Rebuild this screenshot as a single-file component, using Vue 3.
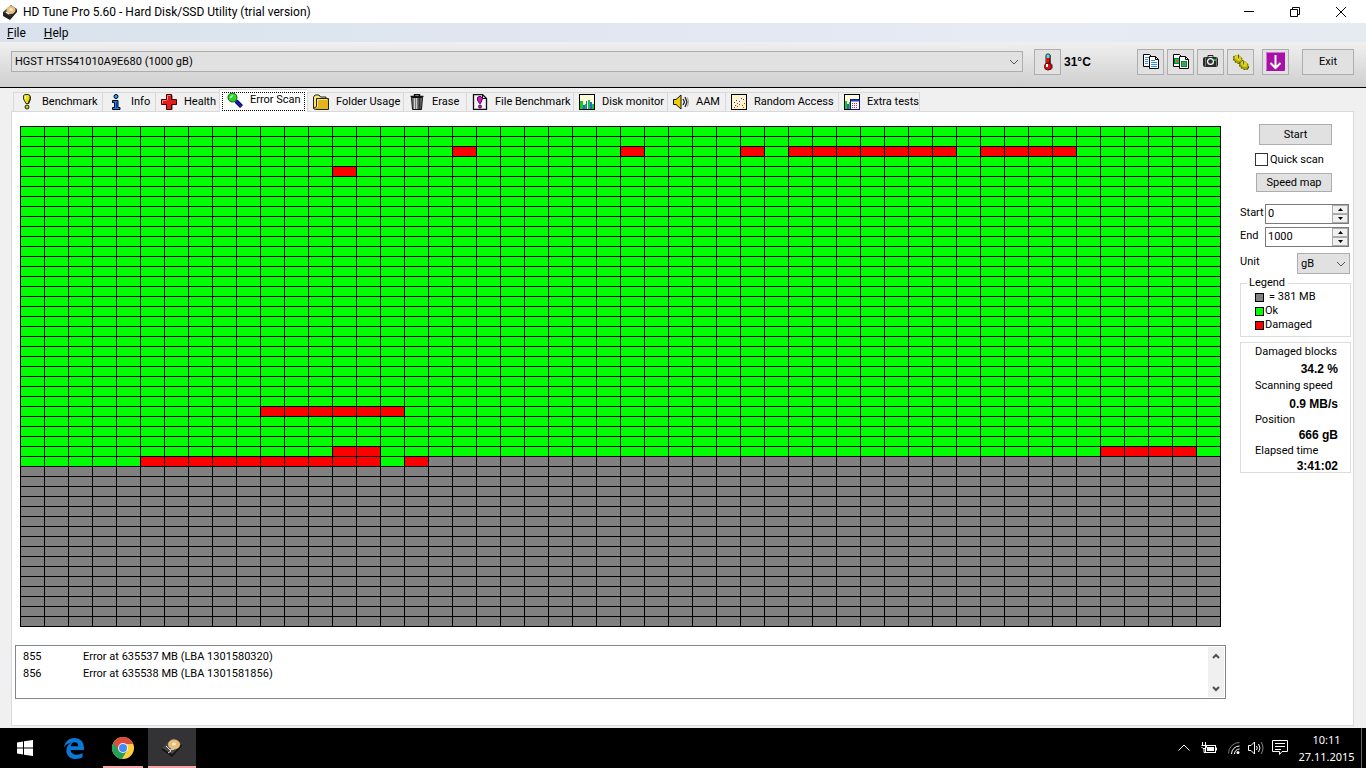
<script setup>
import { ref } from 'vue'

const COLS = 50
const ROWS = 50
const CURRENT_ROW = 33
const CURRENT_COL = 16

const damaged = {
  2: [[18, 18], [25, 25], [30, 30], [32, 38], [40, 43]],
  4: [[13, 13]],
  28: [[10, 15]],
  32: [[13, 14], [45, 48]],
  33: [[5, 14], [16, 16]]
}

const blocks = []
for (let r = 0; r < ROWS; r++) {
  for (let c = 0; c < COLS; c++) {
    const pending = r > CURRENT_ROW || (r === CURRENT_ROW && c > CURRENT_COL)
    const bad = (damaged[r] || []).some(([a, b]) => c >= a && c <= b)
    blocks.push(pending ? 'pending' : bad ? 'bad' : 'ok')
  }
}

const tabs = [
  { id: 'bench', label: 'Benchmark' },
  { id: 'info', label: 'Info' },
  { id: 'health', label: 'Health' },
  { id: 'scan', label: 'Error Scan' },
  { id: 'folder', label: 'Folder Usage' },
  { id: 'erase', label: 'Erase' },
  { id: 'file', label: 'File Benchmark' },
  { id: 'monitor', label: 'Disk monitor' },
  { id: 'aam', label: 'AAM' },
  { id: 'random', label: 'Random Access' },
  { id: 'extra', label: 'Extra tests' }
]
const active = ref('scan')
const start = ref('0')
const end = ref('1000')
const quick = ref(false)

const errors = [
  { n: 855, text: 'Error at 635537 MB (LBA 1301580320)' },
  { n: 856, text: 'Error at 635538 MB (LBA 1301581856)' }
]

const step = (field, by) => {
  const target = field === 'start' ? start : end
  target.value = String(Math.max(0, Number(target.value) + by))
}
</script>

<template>
  <div class="screen">
    <header class="titlebar">
      <svg class="app-icon" viewBox="0 0 16 16">
        <path d="M1 8 9 1l6 4-7 10-6-3z" fill="#4a4238" />
        <path d="M1 8l7 4 7-7v3l-7 8-7-4z" fill="#22201e" />
        <ellipse cx="9" cy="6" rx="4.5" ry="4" fill="#e8bf80" />
        <ellipse cx="9" cy="5.5" rx="1.5" ry="1.2" fill="#fff4d8" />
        <path d="M4 8l3 2" stroke="#eee" stroke-width="1.5" />
      </svg>
      <h1>HD Tune Pro 5.60 - Hard Disk/SSD Utility (trial version)</h1>
      <div class="window-controls">
        <button aria-label="Minimize"><svg viewBox="0 0 12 12"><path d="M1 5.5h10" /></svg></button>
        <button aria-label="Restore"><svg viewBox="0 0 12 12"><path d="M1.5 3.500h7v7h-7zM3.500 3.500v-2h7v7h-2" /></svg></button>
        <button aria-label="Close"><svg viewBox="0 0 12 12"><path d="M1 1l10 10M11 1 1 11" /></svg></button>
      </div>
    </header>

    <nav class="menubar">
      <button><u>F</u>ile</button>
      <button><u>H</u>elp</button>
    </nav>

    <div class="toolbar">
      <div class="drop drive">
        <select aria-label="Drive">
          <option>HGST HTS541010A9E680 (1000 gB)</option>
        </select>
        <svg class="chevron" viewBox="0 0 10 6"><path d="M1 1l4 4 4-4" /></svg>
      </div>
      <button class="tool thermo" aria-label="Temperature">
        <svg viewBox="0 0 18 18">
          <path d="M10 2h2v8l2 2v3l-2 2H8l-2-2v-3l3-2z" fill="#222" opacity=".5" />
          <rect x="7" y="1" width="4" height="11" rx="1.5" fill="#58dce8" stroke="#222" />
          <rect x="7" y="5" width="4" height="8" fill="#e01010" />
          <path d="M10.500 5v6" stroke="#600" />
          <circle cx="9" cy="13.500" r="3.500" fill="#e01010" stroke="#500" />
          <rect x="7" y="11" width="2" height="3" fill="#fff" />
        </svg>
      </button>
      <strong class="temp">31°C</strong>
      <div class="tools">
        <button class="tool" aria-label="Copy text">
          <svg viewBox="0 0 18 18">
            <path d="M1.500 1.500h6l2 2v10h-8z" fill="#fff" stroke="#000" />
            <path d="M7.500 3.500h6l3 3v9h-9z" fill="#fff" stroke="#000" />
            <path d="M13.500 3.500v3h3" fill="none" stroke="#000" />
            <path d="M3 4.500h4M3 6.500h3M3 8.500h3M3 10.500h3M9 7.500h4M9 9.500h6M9 11.500h6M9 13.500h6" stroke="#2a8cf0" />
          </svg>
        </button>
        <button class="tool" aria-label="Copy image">
          <svg viewBox="0 0 18 18">
            <path d="M1.500 1.500h6l2 2v10h-8z" fill="#fff" stroke="#000" />
            <rect x="2.500" y="5.500" width="5" height="5" fill="#10d030" stroke="#007a60" />
            <rect x="4" y="7" width="2" height="2" fill="#e05010" />
            <path d="M7.500 3.500h6l3 3v9h-9z" fill="#fff" stroke="#000" />
            <path d="M13.500 3.500v3h3" fill="none" stroke="#000" />
            <rect x="9.500" y="8.500" width="5" height="5" fill="#10d030" stroke="#007a60" />
            <rect x="11" y="10" width="2" height="2" fill="#e05010" />
          </svg>
        </button>
        <button class="tool" aria-label="Screenshot">
          <svg viewBox="0 0 18 18">
            <path d="M6 4.500V2.500h5v2" fill="none" stroke="#222" />
            <rect x="1" y="4" width="15" height="10" rx="2" fill="#2a2a2a" />
            <path d="M3.500 4.500v9M14.500 4.500v9" stroke="#777" />
            <circle cx="8.500" cy="8.500" r="3.500" fill="#fff" />
            <circle cx="8.500" cy="8.500" r="2.300" fill="#303436" />
            <rect x="12" y="6" width="2" height="2" fill="#0c2" />
          </svg>
        </button>
        <button class="tool" aria-label="Options">
          <svg viewBox="0 0 18 18">
            <ellipse cx="6" cy="6.500" rx="5" ry="3.500" transform="rotate(35 6 6.500)" fill="#a8a400" stroke="#4c4a00" stroke-dasharray="2 1" />
            <ellipse cx="6" cy="5" rx="3.500" ry="2.300" transform="rotate(35 6 5)" fill="#dcd420" />
            <ellipse cx="12" cy="12.500" rx="5" ry="3.500" transform="rotate(35 12 12.500)" fill="#a8a400" stroke="#4c4a00" stroke-dasharray="2 1" />
            <ellipse cx="12" cy="11" rx="3.500" ry="2.300" transform="rotate(35 12 11)" fill="#dcd420" />
            <path d="M6.500 1.500v4M11.500 7.500v4" stroke="#665f00" />
          </svg>
        </button>
        <button class="tool spaced" aria-label="Save">
          <svg class="big" viewBox="0 0 20 20">
            <rect width="19" height="19" rx="1" fill="#a512a5" />
            <path d="M.5 18V.5h18" stroke="#d870d8" fill="none" />
            <path d="M9.500 3v12M4.500 11l5 5 5-5" fill="none" stroke="#fff" stroke-width="2" />
          </svg>
        </button>
        <button class="tool exit">Exit</button>
      </div>
    </div>

    <div class="tabs" role="tablist">
      <button
        v-for="t in tabs"
        :key="t.id"
        class="tab"
        :class="{ active: active === t.id }"
        role="tab"
        :aria-selected="active === t.id"
        @click="active = t.id"
      >
        <svg v-if="t.id === 'bench'" viewBox="0 0 16 16">
          <path d="M5 2l2-1.500h3L12 3v2l-2 5H7L5 5z" fill="#222" />
          <path d="M4.500 1.500 6 .5h3l2 1v3L9 9.500H7L4.500 5z" fill="#f0e000" stroke="#333" />
          <path d="M6.500 2v2.500" stroke="#fff" />
          <circle cx="8" cy="13" r="2" fill="#d8cc00" stroke="#222" />
        </svg>
        <svg v-else-if="t.id === 'info'" viewBox="0 0 16 16">
          <circle cx="8" cy="2.500" r="2" fill="#20a8f8" stroke="#000" />
          <path d="M4.500 6.500H10v7h2v2H4.500v-2h2v-5h-2z" fill="#1088f8" stroke="#000" />
          <path d="M8.500 8v6" stroke="#0038e0" />
        </svg>
        <svg v-else-if="t.id === 'health'" viewBox="0 0 16 16">
          <path d="M6 1.500h5.500v4.500h4v5h-4v4.500H6V11H1.500V6H6z" fill="#333" />
          <path d="M5.500.5h5v5h5v5h-5v5h-5v-5h-5v-5h5z" fill="#e01c1c" stroke="#400" />
          <path d="M6.500 6V1.500h3M1.500 9.500v-3h4" stroke="#ff8080" fill="none" />
        </svg>
        <svg v-else-if="t.id === 'scan'" viewBox="0 0 16 16">
          <path d="M9 9l5.500 5.500" stroke="#000" stroke-width="4" />
          <path d="M9 9l5.500 5.500" stroke="#1018c8" stroke-width="2.500" />
          <circle cx="5.500" cy="5.500" r="4.500" fill="#28d428" stroke="#106010" />
          <path d="M3 6l3-3" stroke="#b8ffb8" stroke-width="1.500" />
        </svg>
        <svg v-else-if="t.id === 'folder'" viewBox="0 0 16 16">
          <path d="M.5 14.500V3l1.500-2h4l1.500 2H13v1.500" fill="#f8e878" stroke="#222" />
          <path d="M3.500 4.500h12v11h-13l-2-1 3-2z" fill="#e4b418" stroke="#222" />
          <path d="M4.500 13V5.500H14" stroke="#ffe980" fill="none" />
        </svg>
        <svg v-else-if="t.id === 'erase'" viewBox="0 0 16 16">
          <path d="M1.500 2.500h13M5.500 2V.5h5V2" stroke="#111" stroke-width="1.500" fill="none" />
          <path d="M2.500 3.500h11l-1 12h-9z" fill="#777" stroke="#111" />
          <path d="M5.500 4v11M7.500 4v11" stroke="#ccc" />
          <path d="M10.500 4v11" stroke="#333" stroke-width="2" />
        </svg>
        <svg v-else-if="t.id === 'file'" viewBox="0 0 16 16">
          <path d="M1.500.5h9l4 4v11h-13z" fill="#f8f4f8" stroke="#111" stroke-width="1.300" />
          <path d="M10.500.5v4h4" fill="none" stroke="#111" />
          <path d="M5.500 3.500 7 2.500h2l1.500 2L8.500 9.500h-1L5.500 6z" fill="#e010d8" stroke="#401040" />
          <circle cx="8" cy="12.500" r="1.500" fill="#e010d8" stroke="#401040" />
        </svg>
        <svg v-else-if="t.id === 'monitor'" viewBox="0 0 16 16">
          <rect x=".5" y=".5" width="15" height="15" fill="#fffcd8" stroke="#000" />
          <path d="M1 15V7h3v8M6 15v-5h2v5M9 15V6h2v9M13 15v-5h2v5" fill="#0ad020" />
          <path d="M4 15v-4h2v4M7 15V7h1v8M11 15V8h2v7" fill="#3858e8" />
        </svg>
        <svg v-else-if="t.id === 'aam'" viewBox="0 0 16 16">
          <path d="M.5 5.500H3l5-4.500v14l-5-4.500H.5z" fill="#f0d000" stroke="#111" />
          <path d="M10 5l1.500 3L10 11M12 3l2 5-2 5" fill="none" stroke="#222" stroke-width="1.300" />
          <path d="M14.500 3.500l1 4.500-1 4.500" fill="none" stroke="#999" />
        </svg>
        <svg v-else-if="t.id === 'random'" viewBox="0 0 16 16">
          <rect x=".5" y=".5" width="15" height="15" fill="#fff4cc" stroke="#000" />
          <path d="M3 8.500h1M5 6.500h1M8 7.500h1M10 4.500h1M12 5.500h1M4 11.500h1" stroke="#3030ff" />
          <path d="M3 13.500h1M6 12.500h1M8 10.500h1M11 11.500h1M13 9.500h1M6 9.500h1M12 13.500h1" stroke="#f02020" />
        </svg>
        <svg v-else viewBox="0 0 16 16">
          <rect x=".5" y=".5" width="15" height="15" fill="#fffcd8" stroke="#000" />
          <path d="M1 15V7h2v8M5 15V8h1v7" fill="#0ad020" />
          <path d="M3 15v-5h2v5" fill="#3858e8" />
          <rect x="6.500" y="5.500" width="9" height="10" fill="#fff" stroke="#10107a" />
          <path d="M7 6.500h8" stroke="#2038c0" stroke-width="2" />
          <path d="M8 9.500h6M8 11.500h6M8 13.500h6" stroke="#e02040" stroke-dasharray="1 1" />
        </svg>
        <span>{{ t.label }}</span>
      </button>
    </div>

    <main class="panel">
      <section class="work">
        <div class="map" role="img" aria-label="Block map">
          <i v-for="(b, i) in blocks" :key="i" :class="b"></i>
        </div>
        <div class="log">
          <table>
            <tbody>
              <tr v-for="e in errors" :key="e.n">
                <td class="num">{{ e.n }}</td>
                <td>{{ e.text }}</td>
              </tr>
            </tbody>
          </table>
          <div class="scrollbar">
            <button aria-label="Scroll up"><svg viewBox="0 0 8 6"><path d="M1 5l3-3 3 3" /></svg></button>
            <button aria-label="Scroll down"><svg viewBox="0 0 8 6"><path d="M1 1l3 3 3-3" /></svg></button>
          </div>
        </div>
      </section>

      <aside class="side">
        <button class="push">Start</button>
        <label class="check"><input v-model="quick" type="checkbox" />Quick scan</label>
        <button class="push speed">Speed map</button>
        <div class="field">
          <label for="start">Start</label>
          <div class="spin">
            <input id="start" v-model="start" type="text" />
            <div class="arrows">
              <button aria-label="Increase start" @click="step('start', 1)"><svg viewBox="0 0 5 3"><path d="M0 3 2.500 0 5 3z" /></svg></button>
              <button aria-label="Decrease start" @click="step('start', -1)"><svg viewBox="0 0 5 3"><path d="M0 0h5L2.500 3z" /></svg></button>
            </div>
          </div>
        </div>
        <div class="field">
          <label for="end">End</label>
          <div class="spin">
            <input id="end" v-model="end" type="text" />
            <div class="arrows">
              <button aria-label="Increase end" @click="step('end', 1)"><svg viewBox="0 0 5 3"><path d="M0 3 2.500 0 5 3z" /></svg></button>
              <button aria-label="Decrease end" @click="step('end', -1)"><svg viewBox="0 0 5 3"><path d="M0 0h5L2.500 3z" /></svg></button>
            </div>
          </div>
        </div>
        <div class="field unit">
          <label for="unit">Unit</label>
          <div class="drop">
            <select id="unit"><option>gB</option></select>
            <svg class="chevron" viewBox="0 0 10 6"><path d="M1 1l4 4 4-4" /></svg>
          </div>
        </div>
        <fieldset class="legend">
          <legend>Legend</legend>
          <p class="size"><i class="pending"></i>= 381 MB</p>
          <p><i class="ok"></i>Ok</p>
          <p><i class="bad"></i>Damaged</p>
        </fieldset>
        <dl class="stats">
          <dt>Damaged blocks</dt><dd>34.2 %</dd>
          <dt>Scanning speed</dt><dd>0.9 MB/s</dd>
          <dt>Position</dt><dd>666 gB</dd>
          <dt>Elapsed time</dt><dd>3:41:02</dd>
        </dl>
      </aside>
    </main>

    <footer class="taskbar">
      <button class="task" aria-label="Windows">
        <svg width="16" height="16" viewBox="0 0 16 16"><path d="M0 2.500 6 1.500v6H0zM7 1.300 16 0v7.500H7zM0 8.500h6v6l-6-1zM7 8.500h9V16l-9-1.300z" fill="#fff" /></svg>
      </button>
      <button class="task" aria-label="Edge">
        <svg width="20" height="21" viewBox="0 0 20 21"><path d="M0 9.500C.8 4 4.800 0 10.300 0 16.500 0 20 4.300 20 10v2H6.600c.2 3.300 3.200 4.700 6.300 4.700 2.200 0 4-.6 5.600-1.600v4.200c-2 1.200-4.200 1.700-6.600 1.700C6.200 21 2.400 17.400 2.400 12.400c0-3.700 2-6.500 5.300-7.900C3.800 5 1.500 7 0 9.500zM6.700 8.300h7.600c0-2.600-1.300-4.100-3.700-4.100-2.200 0-3.500 1.600-3.900 4.100z" fill="#0a78d7" /></svg>
      </button>
      <button class="task chrome" aria-label="Chrome">
        <svg width="22" height="22" viewBox="0 0 22 22">
          <circle cx="11" cy="11" r="11" fill="#fdd03c" />
          <path d="M11 11 1.500 5.500A11 11 0 0 0 10 22l5-8.500z" fill="#22a05a" />
          <path d="M1.500 5.500A11 11 0 0 1 20.500 5.500L21 7H11L6.500 13.500z" fill="#dd4b3e" />
          <circle cx="11" cy="11" r="5" fill="#f4f4f4" />
          <circle cx="11" cy="11" r="4" fill="#4688f4" />
        </svg>
      </button>
      <button class="task current" aria-label="HD Tune Pro">
        <svg width="20" height="20" viewBox="0 0 20 20">
          <path d="M0 11 11 1l9 6-10 12z" fill="#4c4844" />
          <path d="M0 11l10 6 10-10v2L10 20 0 13z" fill="#161514" />
          <ellipse cx="12" cy="7.500" rx="6" ry="5" fill="#e9bb78" />
          <ellipse cx="12" cy="7" rx="2" ry="1.500" fill="#fff0cc" />
          <path d="M4 9l5 5-3 2M12 12l-4 1" stroke="#ddd" fill="none" />
        </svg>
      </button>
      <div class="tray">
        <svg class="wide" width="12" height="12" viewBox="0 0 12 12"><path d="M.5 8.500 6 3l5.500 5.500" /></svg>
        <svg class="wide" width="16" height="12" viewBox="0 0 16 12">
          <rect x="4.500" y="3.500" width="10" height="7" /><path d="M6 5h7v4H6z" fill="#fff" stroke="none" /><path d="M15.500 5.500v3M1.500 0v3M4.500 0v3M.5 3.500h5v2l-1.500 1H2L.5 5M3 6.500v4h2" />
        </svg>
        <svg width="12" height="12" viewBox="0 0 12 12">
          <path d="M.5 11.500a11 11 0 0 1 11-11" stroke="#777" /><path d="M3.500 12a8 8 0 0 1 8-8M6.500 12a5 5 0 0 1 5-5" /><circle cx="10" cy="10.500" r="1.500" fill="#fff" stroke="none" />
        </svg>
        <svg width="16" height="14" viewBox="0 0 16 14">
          <path d="M.5 4.500H3L6.500 1v12L3 9.500H.5z" /><path d="M8.500 5q1.500 2 0 4M10.500 3q3 4 0 8" /><path d="M13 1q4 6 0 12" stroke="#888" />
        </svg>
        <svg width="16" height="16" viewBox="0 0 16 16">
          <path d="M.5.500h15v11H10l-2.500 3v-3h-7zM3 3.500h10M3 6.500h10M3 9.500h6" />
        </svg>
        <div class="clock"><span>10:11</span><span>27.11.2015</span></div>
      </div>
      <i class="peek"></i>
    </footer>
  </div>
</template>

<style>
html,
body {
  margin: 0;
  background: #f0f0f0;
}
</style>

<style scoped>
* {
  box-sizing: border-box;
}
.screen {
  min-height: 100vh;
  display: flex;
  flex-direction: column;
  background: #f0f0f0;
  color: #000;
  font: 11px/14px Roboto, "Liberation Sans", sans-serif;
}
button,
input,
select {
  font: inherit;
  color: inherit;
  margin: 0;
  padding: 0;
  border-radius: 0;
}
svg {
  display: block;
  flex: none;
}
.titlebar {
  height: 23px;
  display: flex;
  align-items: center;
  background: #fff;
  padding: 0 2px;
}
.app-icon {
  width: 16px;
  height: 16px;
}
h1 {
  margin: 0 auto 0 5px;
  font: 12px/16px Roboto, sans-serif;
}
.window-controls {
  display: flex;
}
.window-controls button {
  width: 46px;
  height: 22px;
  display: grid;
  place-items: center;
  border: 0;
  background: none;
}
.window-controls svg {
  width: 12px;
  height: 12px;
  fill: none;
  stroke: #000;
}
.menubar {
  height: 19px;
  display: flex;
  gap: 18px;
  padding: 1px 0 0 7px;
  background: linear-gradient(90deg, #d9e2ec, #e6ebf4 75%, #e4ebf1);
}
.menubar button {
  border: 0;
  background: none;
  font: 12px/18px Roboto, sans-serif;
}
.toolbar {
  height: 46px;
  display: flex;
  align-items: center;
  padding: 0 12px 6px 11px;
  border-bottom: 1px solid #000;
  background: linear-gradient(#f0f0f0, #cfcfcf);
}
.drop {
  position: relative;
  height: 21px;
}
.drop select {
  width: 100%;
  height: 100%;
  padding: 0 3px;
  appearance: none;
  background: #e1e1e1;
  border: 1px solid #adadad;
}
.chevron {
  position: absolute;
  right: 4px;
  top: 8px;
  width: 10px;
  height: 6px;
  fill: none;
  stroke: #555;
  pointer-events: none;
}
.drive {
  flex: 1;
}
.tool {
  width: 27px;
  height: 26px;
  display: grid;
  place-items: center;
  border: 1px solid #adadad;
  background: #e1e1e1;
}
.tool svg {
  width: 18px;
  height: 18px;
}
.tool .big {
  width: 20px;
  height: 20px;
}
.thermo {
  margin-left: 11px;
}
.temp {
  width: 76px;
  padding-left: 3px;
  font: 700 12px/14px "Liberation Sans", sans-serif;
}
.tools {
  display: flex;
  gap: 3px;
}
.spaced {
  margin-left: 5px;
}
.exit {
  width: 52px;
  margin-left: 10px;
}
.tabs {
  display: grid;
  grid-template-columns: 89px 53px 64px 88px 96px 63px 107px 94px 58px 113px 82px;
  align-items: end;
  height: 23px;
  padding-left: 13px;
}
.tab {
  height: 19px;
  display: flex;
  align-items: center;
  gap: 7px;
  padding: 0 5px;
  border: 1px solid #d9d9d9;
  border-width: 1px 0 0 1px;
  background: #f0f0f0;
  white-space: nowrap;
}
.tab:last-child {
  border-right-width: 1px;
}
.tab svg {
  width: 16px;
  height: 16px;
}
.tab.active {
  position: relative;
  height: 23px;
  padding: 0 4px 3px 7px;
  margin-bottom: -1px;
  background: #fff;
}
.tab.active::after {
  content: "";
  position: absolute;
  inset: 2px 2px 1px;
  border: 1px dotted #000;
}
.panel {
  flex: 1;
  display: flex;
  gap: 14px;
  margin: 0 12px 2px 11px;
  padding: 0 2px 0 3px;
  border: 1px solid #d9d9d9;
  background: #fff;
}
.work {
  flex: 1;
  min-width: 0;
  display: flex;
  flex-direction: column;
  gap: 18px;
  padding: 14px 0 26px;
}
.map {
  display: grid;
  grid-template-columns: repeat(50, 1fr);
  grid-auto-rows: 9px;
  gap: 1px;
  margin: 0 5px;
  padding: 1px;
  background: #000;
}
.ok {
  background: #0f0;
}
.bad {
  background: #f00;
}
.pending {
  background: #808080;
}
.log {
  display: flex;
  justify-content: space-between;
  min-height: 54px;
  padding: 1px;
  border: 1px solid #828790;
}
.log table {
  align-self: flex-start;
  border-collapse: collapse;
  margin: 1px 0 0 6px;
  line-height: 17px;
}
.log td {
  padding: 0;
}
.log .num {
  width: 60px;
}
.scrollbar {
  width: 16px;
  display: flex;
  flex-direction: column;
  justify-content: space-between;
  background: #f0f0f0;
}
.scrollbar button {
  width: 16px;
  height: 17px;
  display: grid;
  place-items: center;
  border: 0;
  background: none;
}
.scrollbar svg {
  width: 8px;
  height: 6px;
  fill: none;
  stroke: #505050;
  stroke-width: 2;
}
.side {
  width: 111px;
  display: flex;
  flex-direction: column;
  padding-top: 12px;
}
.push {
  align-self: flex-end;
  width: 73px;
  height: 21px;
  margin-right: 19px;
  border: 1px solid #adadad;
  background: #e1e1e1;
}
.speed {
  width: 76px;
  height: 19px;
  margin-bottom: 12px;
}
.check {
  display: flex;
  align-items: center;
  gap: 2px;
  height: 13px;
  margin: 8px 0 7px 15px;
}
.check input {
  width: 13px;
  height: 13px;
  appearance: none;
  border: 1px solid #333;
  background: #fff;
}
.check input:checked {
  background: #333;
}
.field {
  display: flex;
  justify-content: space-between;
  margin: 0 2px 3px 0;
}
.field label {
  padding-top: 2px;
}
.spin {
  width: 84px;
  height: 20px;
  display: flex;
  border: 1px solid #7a7a7a;
  background: #fff;
}
.spin input {
  flex: 1;
  min-width: 0;
  padding-left: 2px;
  border: 0;
  outline: 0;
  background: none;
}
.arrows {
  display: flex;
  flex-direction: column;
}
.arrows button {
  width: 16px;
  height: 9px;
  display: grid;
  place-items: center;
  border: 1px solid #acacac;
  background: #f0f0f0;
}
.arrows svg {
  width: 5px;
  height: 3px;
}
.unit {
  margin: 3px 1px 2px 0;
}
.unit .drop {
  width: 53px;
}
.legend {
  min-width: 0;
  margin: 0 0 5px;
  padding: 0 0 4px 14px;
  border: 1px solid #dcdcdc;
}
.legend legend {
  margin-left: -8px;
  padding: 0 2px;
}
.legend p {
  display: flex;
  align-items: center;
  gap: 1px;
  height: 14px;
  margin: 0;
}
.legend .size {
  gap: 5px;
}
.legend i {
  width: 9px;
  height: 9px;
  border: 1px solid #000;
}
.stats {
  display: grid;
  grid-template-rows: 17px 17px 18px 17px 16px 14px 18px 12px;
  align-items: center;
  margin: 0;
  padding: 0 12px 0 14px;
  border: 1px solid #dcdcdc;
}
.stats dd {
  margin: 0;
  text-align: right;
  font: 700 12px/14px "Liberation Sans", sans-serif;
}
.taskbar {
  height: 40px;
  display: flex;
  background: #000;
  color: #fff;
}
.task {
  width: 49px;
  display: grid;
  place-items: center;
  border: 0;
  background: none;
}
.chrome {
  background: linear-gradient(#f4a6a6, #f4a6a6) 5px 38px / 40px 2px no-repeat;
}
.current {
  width: 48px;
  margin-left: 1px;
  background: #333336;
  border-bottom: 2px solid #f4a6a6;
}
.tray {
  display: flex;
  align-items: center;
  gap: 8px;
  margin-left: auto;
}
.tray svg {
  fill: none;
  stroke: #fff;
}
.tray .wide {
  margin-right: 3px;
}
.clock {
  display: flex;
  flex-direction: column;
  align-items: center;
  width: 65px;
  padding-right: 4px;
  font: 11px/17px "Noto Sans", sans-serif;
}
.peek {
  width: 5px;
  border-left: 1px solid #666;
}
</style>
